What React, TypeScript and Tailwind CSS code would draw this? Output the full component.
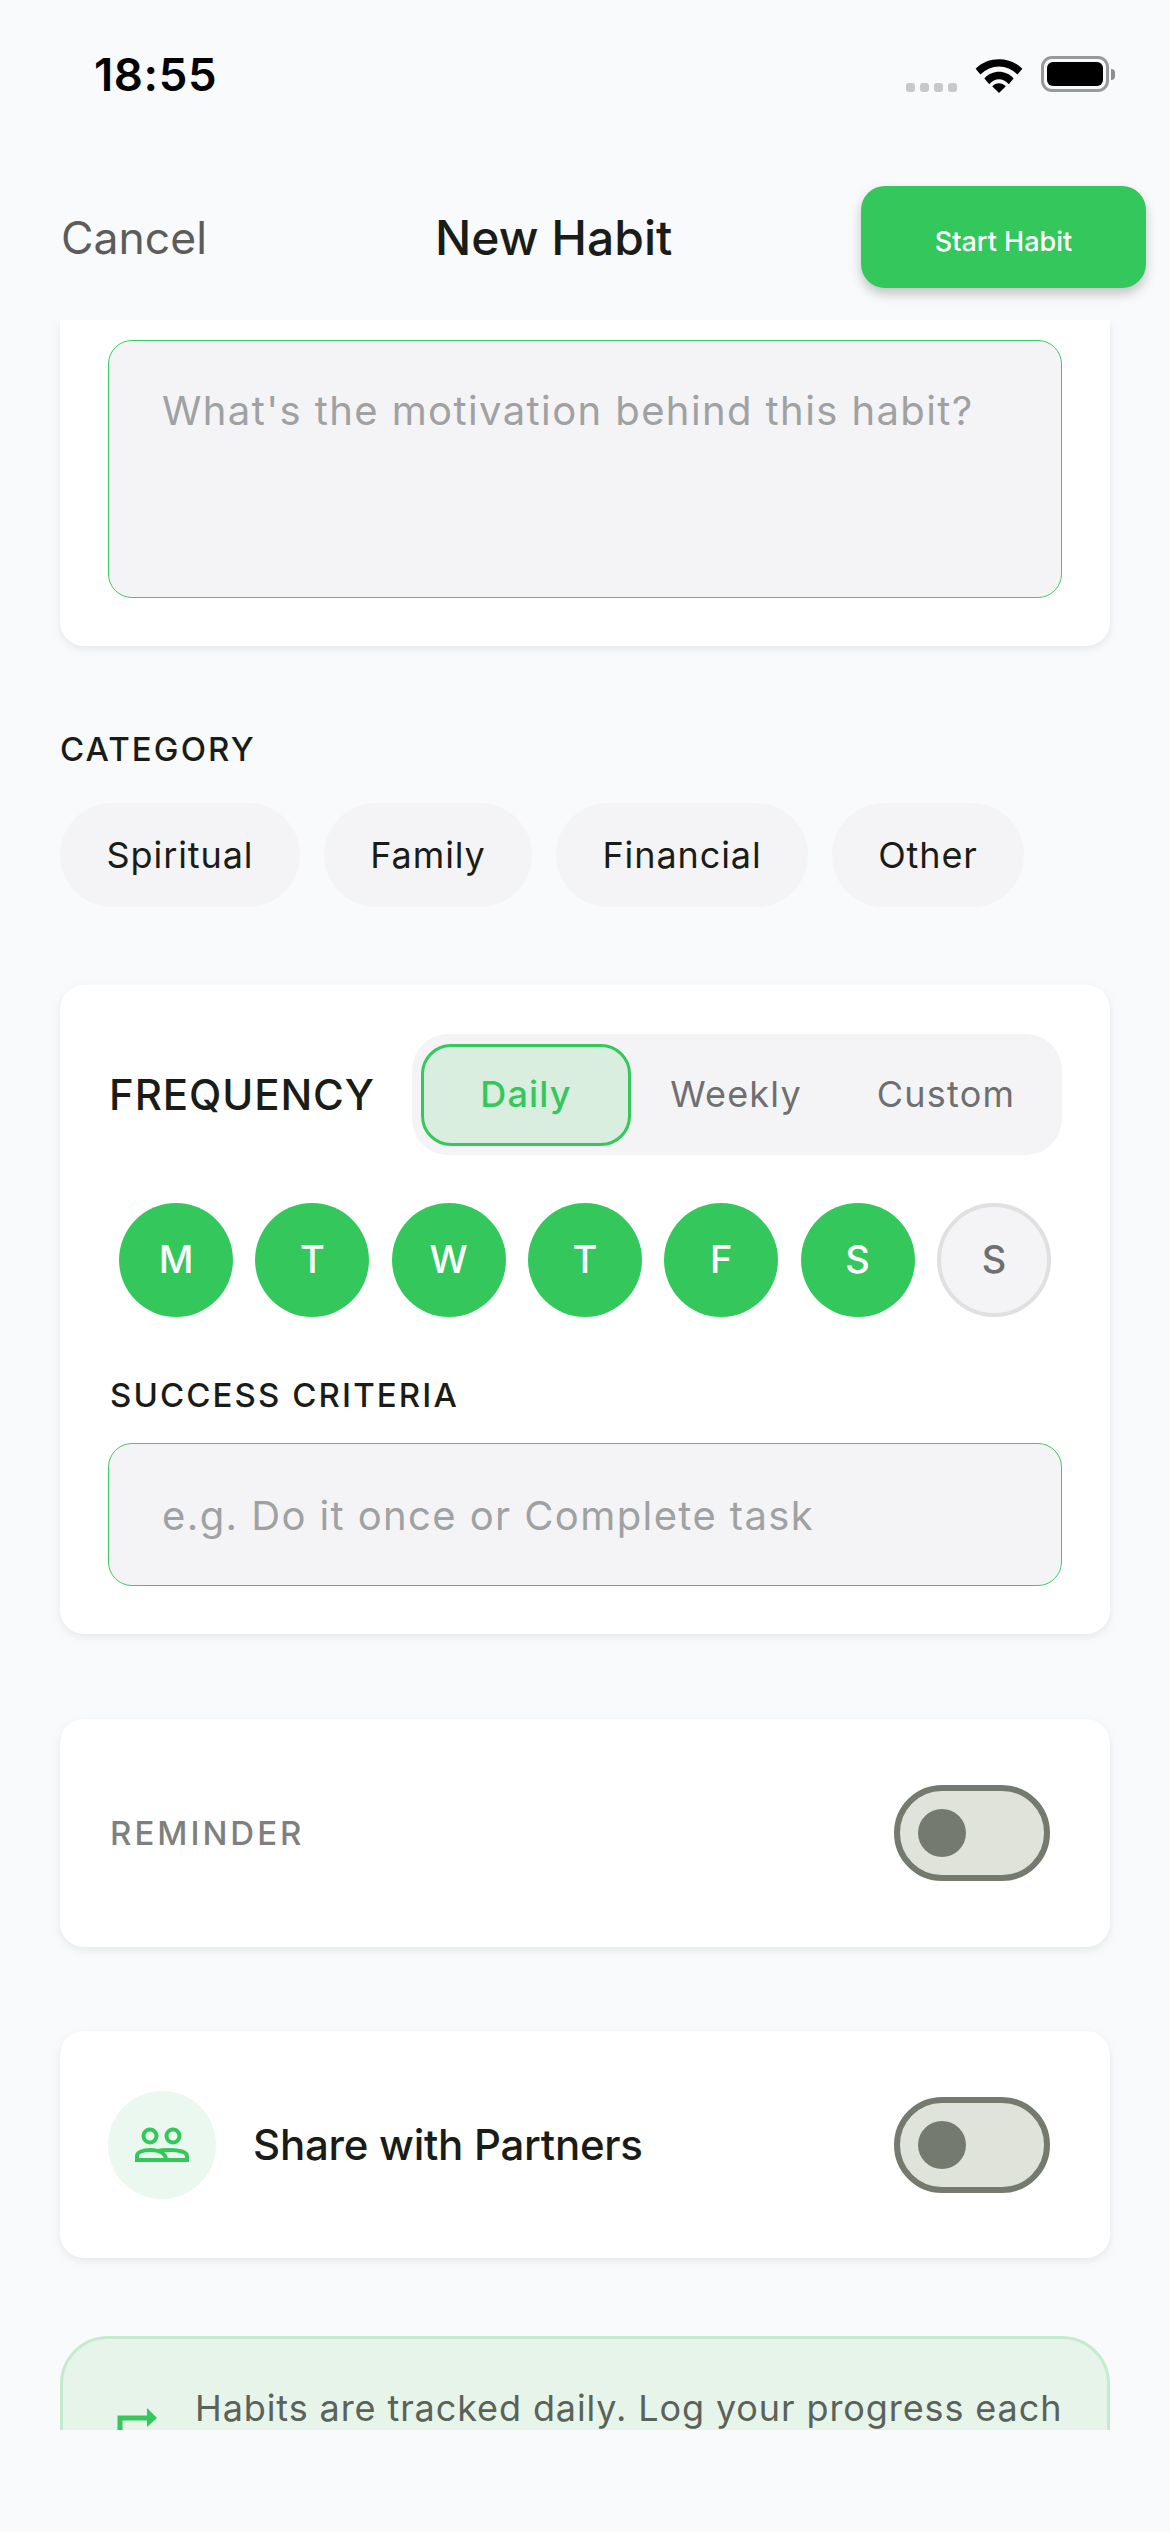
import React from "react";

const DAYS = ["M", "T", "W", "T", "F", "S"];
const CHIPS = [
  { label: "Spiritual", w: "w-[240px]" },
  { label: "Family", w: "w-[208px]" },
  { label: "Financial", w: "w-[252px]" },
  { label: "Other", w: "w-[192px]" },
];

// ── Status bar icons ──────────────────────────────────────────
function Wifi() {
  return (
    <svg width="50" height="37" viewBox="0 0 50 38">
      <path d="M1 13 C14 0 36 0 49 13 L44 19 C33 8 17 8 6 19 Z" fill="#000" />
      <path d="M10 23 C18 14 32 14 40 23 L35 29 C29 22 21 22 15 29 Z" fill="#000" />
      <path d="M18 31 C22 27 28 27 32 31 L25 38 Z" fill="#000" />
    </svg>
  );
}

function Battery() {
  return (
    <div className="flex items-center">
      <div className="w-[68px] h-[36px] rounded-[11px] border-[3px] border-[#999999] p-[3px]">
        <div className="w-full h-full rounded-[6px] bg-black" />
      </div>
      <div className="w-[4px] h-[11px] rounded-r-full bg-[#8e8e8e] ml-[2px]" />
    </div>
  );
}

function Toggle() {
  return (
    <div className="w-[156px] h-[96px] rounded-full border-[6px] border-[#747b6e] bg-[#e0e3da] flex items-center pl-[18px]">
      <div className="w-[48px] h-[48px] rounded-full bg-[#747b6e]" />
    </div>
  );
}

function PartnersIcon() {
  return (
    <svg width="60" height="60" viewBox="0 0 60 60" fill="none" stroke="#34c759" strokeWidth="4">
      <circle cx="18" cy="21" r="6.5" />
      <circle cx="41" cy="21" r="6.5" />
      <path d="M5 45 V41 C5 37 11 35 18 35 C27 35 34 38 34 45 Z" />
      <path d="M26 36 C28 35 31 35 38 35 C47 35 55 37 55 41 V45 H34" />
    </svg>
  );
}

function ArrowIcon() {
  return (
    <svg width="44" height="60" viewBox="0 0 44 60" className="shrink-0 mt-[28px]">
      <path d="M3 60 V15 H32" fill="none" stroke="#34c759" strokeWidth="5" />
      <path d="M30 5 L40 15 L30 24 Z" fill="#34c759" />
    </svg>
  );
}

const cardClass = "bg-white rounded-[24px] shadow-[0_3px_9px_rgba(80,120,95,0.13)]";
const fieldClass =
  "border border-[#3fcb66] rounded-[24px] bg-[#f4f4f6] pl-[53px] text-[#a0a1a3] text-[40px] tracking-[1.4px]";

export default function App() {
  return (
    <div className="w-[1170px] h-[2532px] overflow-hidden bg-[#f9fafc] font-['Inter',sans-serif] text-[#1a1c18]">
      {/* Status bar */}
      <div className="h-[148px] flex items-center justify-between pl-[94px] pr-[55px]">
        <span className="text-[45.5px] tracking-[0.6px] font-semibold text-black pt-[2px]">18:55</span>
        <div className="flex items-center gap-[17px]">
          <div className="flex gap-[5px] self-end mb-[1px]">
            {[0, 1, 2, 3].map((i) => (
              <div key={i} className="w-[9px] h-[9px] rounded-[3px] bg-[#c8c8ca]" />
            ))}
          </div>
          <Wifi />
          <Battery />
        </div>
      </div>

      {/* Nav */}
      <div className="h-[172px] pt-[38px] pb-[32px] pl-[61px] pr-[24px] flex items-center">
        <span className="w-[374px] pt-[3px] text-[44.5px] text-[#5c5d5b]">Cancel</span>
        <span className="pt-[1px] text-[48px] font-medium">New Habit</span>
        <button className="ml-auto w-[285px] h-[102px] pt-[10px] rounded-[24px] bg-[#34c85c] text-white text-[27px] font-medium shadow-[0_6px_12px_rgba(0,0,0,0.22)]">
          Start Habit
        </button>
      </div>

      {/* Scroll area */}
      <main className="h-[2110px] overflow-hidden px-[60px]">
        <section className={`${cardClass} rounded-t-none h-[326px] pt-[20px] px-[48px]`}>
          <div className={`${fieldClass} h-[258px] pt-[40px]`}>What's the motivation behind this habit?</div>
        </section>

        <h2 className="mt-[83px] text-[33px] leading-[40px] font-medium tracking-[2.1px]">CATEGORY</h2>
        <div className="mt-[34px] flex gap-[24px]">
          {CHIPS.map((c) => (
            <div
              key={c.label}
              className={`${c.w} h-[104px] rounded-full bg-[#f4f4f6] flex items-center justify-center text-[36px] tracking-[0.9px]`}
            >
              {c.label}
            </div>
          ))}
        </div>

        <section className={`${cardClass} mt-[78px] h-[649px] pt-[49px] px-[48px]`}>
          <div className="flex items-center justify-between">
            <span className="pl-[1px] text-[42px] font-medium tracking-[0.9px]">FREQUENCY</span>
            <div className="w-[650px] h-[121px] rounded-[36px] bg-[#f4f4f6] flex items-center px-[9px] text-[36px] text-[#6e6f71] tracking-[1.2px]">
              <div className="w-[210px] h-[102px] rounded-[30px] border-[3px] border-[#34c85c] bg-[#d9eedf] flex items-center justify-center pb-[2px] font-medium text-[#34c85c]">
                Daily
              </div>
              <div className="w-[210px] pb-[2px] text-center">Weekly</div>
              <div className="w-[210px] pb-[2px] text-center">Custom</div>
            </div>
          </div>

          <div className="mt-[48px] px-[11px] flex justify-between text-[38px] font-medium">
            {DAYS.map((d, i) => (
              <div key={i} className="w-[114px] h-[114px] pb-[2px] rounded-full bg-[#34c85c] text-white flex items-center justify-center">
                {d}
              </div>
            ))}
            <div className="w-[114px] h-[114px] pb-[2px] rounded-full bg-[#f4f4f6] border-[4px] border-[#e0e0e0] text-[#6e6f71] flex items-center justify-center">
              S
            </div>
          </div>

          <h2 className="mt-[58px] pl-[2px] text-[33px] leading-[40px] font-medium tracking-[2.1px]">SUCCESS CRITERIA</h2>
          <div className={`${fieldClass} mt-[28px] h-[143px] pt-[2px] flex items-center`}>e.g. Do it once or Complete task</div>
        </section>

        <section className={`${cardClass} mt-[85px] h-[228px] pl-[50px] pr-[60px] flex items-center justify-between`}>
          <span className="pt-[2px] text-[33px] font-medium tracking-[3px] text-[#7f807e]">REMINDER</span>
          <Toggle />
        </section>

        <section className={`${cardClass} mt-[84px] h-[227px] pl-[48px] pr-[60px] flex items-center`}>
          <div className="w-[108px] h-[108px] rounded-full bg-[#ebf8ef] flex items-center justify-center">
            <PartnersIcon />
          </div>
          <span className="ml-[37px] text-[42px] font-medium tracking-[-0.25px]">Share with Partners</span>
          <div className="ml-auto">
            <Toggle />
          </div>
        </section>

        <section className="mt-[78px] h-[200px] rounded-[48px] border-[3px] border-[#c3eccd] bg-[#e7f4ea] pl-[54px] pr-[48px] pt-[36px] flex gap-[34px]">
          <ArrowIcon />
          <p className="pt-[3px] text-[36px] leading-[60px] tracking-[0.9px] text-[#5a6259] whitespace-nowrap">
            Habits are tracked daily. Log your progress each
          </p>
        </section>
      </main>
    </div>
  );
}
